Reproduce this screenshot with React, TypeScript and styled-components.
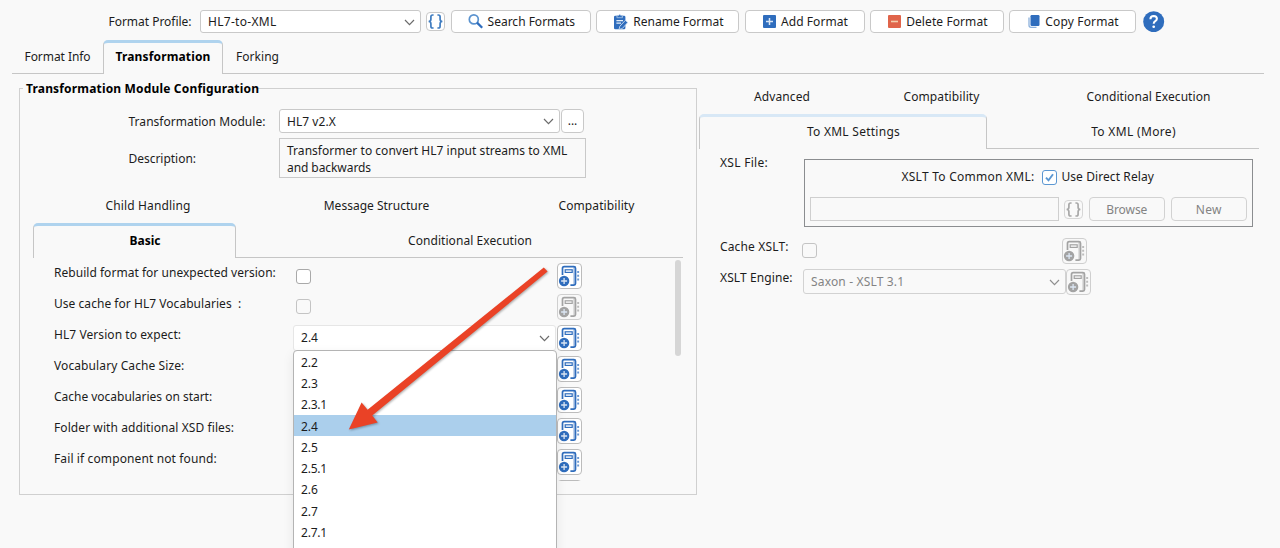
import React from 'react';
import styled, { createGlobalStyle, css } from 'styled-components';

const BLUE = '#2f6dbd';

const GlobalStyle = createGlobalStyle`
  *, *::before, *::after { box-sizing: border-box; }
  body {
    margin: 0;
    background: #f9f9f9;
    color: #1c1c1c;
    font: 12px/18px "Noto Sans", "Open Sans", sans-serif;
    overflow: hidden;
  }
  button { font: inherit; color: inherit; margin: 0; padding: 0; }
`;

const Page = styled.div`
  position: relative;
  width: 1280px;
  height: 548px;
  overflow: hidden;
  background: #f9f9f9;
`;

const Text = styled.span<{ $ls?: number; $bold?: boolean }>`
  white-space: pre;
  letter-spacing: ${(p) => p.$ls ?? 0.06}px;
  ${(p) => p.$bold && css`font-weight: 700; color: #000;`}
`;

/* ---------- toolbar ---------- */

const Toolbar = styled.header`
  display: flex;
  align-items: center;
  height: 43px;
  padding-left: 108.5px;
`;

const Select = styled.div<{ $w: number; $h?: number; $disabled?: boolean; $flat?: boolean }>`
  display: flex;
  align-items: center;
  justify-content: space-between;
  flex: none;
  width: ${(p) => p.$w}px;
  height: ${(p) => p.$h ?? 24}px;
  padding: 1px 5px 0 7px;
  border: 1px solid ${(p) => (p.$flat ? '#e6e6e6' : p.$disabled ? '#d2d2d2' : '#c9c9c9')};
  border-radius: 3px;
  background: ${(p) => (p.$disabled ? '#f9f9f9' : '#fff')};
  color: ${(p) => (p.$disabled ? '#838383' : '#1c1c1c')};
`;

const ProfileSelect = styled(Select)`
  margin: 0 5px 0 8.5px;
`;

const BraceButton = styled.button<{ $disabled?: boolean }>`
  display: grid;
  place-items: center;
  flex: none;
  width: 19px;
  height: 19px;
  border: 1px solid ${(p) => (p.$disabled ? '#d6d6d6' : '#c9c9c9')};
  border-radius: 4px;
  background: ${(p) => (p.$disabled ? '#f9f9f9' : '#fff')};
  color: ${(p) => (p.$disabled ? '#a8a8a8' : '#3f7cc0')};
`;

const ToolButton = styled.button<{ $w: number; $pad: number }>`
  display: flex;
  align-items: center;
  gap: 5px;
  flex: none;
  width: ${(p) => p.$w}px;
  height: 23px;
  margin-left: 5.6px;
  padding-left: ${(p) => p.$pad}px;
  border: 1px solid #c9c9c9;
  border-radius: 4px;
  background: #fff;
`;

const HelpButton = styled.button`
  display: flex;
  margin-left: 7.4px;
  border: 0;
  background: none;
`;

/* ---------- tabs ---------- */

const MainTabs = styled.nav`
  display: flex;
  height: 34px;
  margin: -3px 16px 0 12px;
`;

const TabRow = styled.nav<{ $h?: number }>`
  display: flex;
  height: ${(p) => p.$h ?? 34}px;
`;

const Tab = styled.div<{ $w?: number; $active?: boolean; $line?: boolean; $pale?: boolean; $shift?: number }>`
  display: flex;
  align-items: center;
  justify-content: center;
  ${(p) => (p.$w ? `flex: none; width: ${p.$w}px;` : 'flex: 1;')}
  padding: 1px 0 0 ${(p) => p.$shift ?? 0}px;
  border-bottom: 1px solid ${(p) => (p.$line ? '#c6c6c6' : 'transparent')};
  ${(p) =>
    p.$active &&
    css`
      padding-top: 0;
      padding-bottom: 3px;
      border: 1px solid #c6c6c6;
      border-top: 3px solid ${p.$pale ? '#d8e8f6' : '#afd3ee'};
      border-bottom: 0;
      border-radius: 5px 5px 0 0;
    `}
`;

const MainTabFill = styled(Tab)`
  justify-content: flex-start;
  padding-left: 13px;
`;

/* ---------- main columns ---------- */

const Columns = styled.main`
  display: flex;
`;

const GroupBox = styled.section`
  flex: none;
  width: 678px;
  height: 407px;
  margin: 14px 0 0 19px;
  border: 1px solid #d0d0d0;
`;

const Legend = styled.div`
  display: flex;
  align-items: center;
  width: 234px;
  height: 18px;
  margin: -9px 0 0 3px;
  padding-left: 3px;
  background: #f9f9f9;
`;

const FieldRow = styled.div<{ $top: number; $h: number }>`
  display: flex;
  align-items: center;
  height: ${(p) => p.$h}px;
  margin-top: ${(p) => p.$top}px;
  padding-left: 108.5px;
`;

const FieldLabel = styled.div`
  flex: none;
  width: 150.5px;
  padding-top: 2px;
`;

const EllipsisButton = styled.button`
  width: 23px;
  height: 24px;
  margin-left: 1px;
  border: 1px solid #c9c9c9;
  border-radius: 4px;
  background: #fff;
`;

const Description = styled.div`
  display: flex;
  flex-direction: column;
  width: 307px;
  height: 40px;
  padding: 3px 7px;
  border: 1px solid #c9c9c9;
  line-height: 17px;
`;

const InnerTabs = styled.div`
  margin: 11px 13px 0;
`;

const ScrollPane = styled.div`
  display: flex;
  justify-content: space-between;
  height: 223px;
  margin: 0 13px;
  overflow: hidden;
`;

const OptionList = styled.div`
  padding: 5.3px 0 0 21px;
`;

const OptionRow = styled.div<{ $tall?: boolean }>`
  display: flex;
  align-items: flex-start;
  height: ${(p) => (p.$tall ? 31.8 : 30.85)}px;
`;

const OptionLabel = styled.div`
  flex: none;
  width: 239px;
  padding-top: 1px;
`;

const OptionValue = styled.div`
  flex: none;
  width: 264px;
`;

const CheckBox = styled.span<{ $disabled?: boolean; $on?: boolean }>`
  display: grid;
  place-items: center;
  flex: none;
  width: 15px;
  height: 15px;
  border: 1px solid ${(p) => (p.$on ? '#5b97d2' : p.$disabled ? '#c4c4c4' : '#a9a9a9')};
  border-radius: 3px;
  background: ${(p) => (p.$disabled ? '#f9f9f9' : '#fff')};
`;

const OptionCheck = styled(CheckBox)`
  margin: 5.3px 0 0 3px;
`;

const NoteButton = styled.button<{ $disabled?: boolean }>`
  display: grid;
  place-items: center;
  flex: none;
  width: 25px;
  height: 26px;
  border: 1px solid ${(p) => (p.$disabled ? '#cfcfcf' : '#bcbcbc')};
  border-radius: 4px;
  background: ${(p) => (p.$disabled ? '#f8f8f8' : '#fff')};
  color: ${(p) => (p.$disabled ? '#a3a3a3' : BLUE)};
`;

const ScrollThumb = styled.div`
  width: 6px;
  height: 96px;
  margin: 2px 2px 0 0;
  border-radius: 3px;
  background: #d6d6d6;
`;

/* ---------- right side ---------- */

const RightPanel = styled.section`
  flex: none;
  width: 560px;
  margin: 6px 0 0 2px;
`;

const Settings = styled.div`
  display: grid;
  grid-template-columns: 83px 450px;
  grid-template-rows: 79px 31px 30px;
  padding: 10px 0 0 21px;
`;

const SettingLabel = styled.div<{ $top: number }>`
  margin-top: ${(p) => p.$top}px;
`;

const XslBox = styled.div`
  height: 68px;
  margin-left: 1px;
  padding: 8px 5px;
  border: 1px solid #8b8d90;
`;

const RelayRow = styled.div`
  display: flex;
  align-items: center;
  justify-content: flex-end;
  height: 18px;
  padding-right: 93px;
`;

const RelayCheck = styled(CheckBox)`
  margin: 0 4px 0 8px;
`;

const FileRow = styled.div`
  display: flex;
  align-items: center;
  height: 24px;
  margin-top: 11px;
`;

const FileInput = styled.div`
  flex: none;
  width: 249px;
  height: 24px;
  margin-right: 5px;
  border: 1px solid #cfcfcf;
`;

const PlainButton = styled.button`
  width: 77px;
  height: 24px;
  margin-left: 5.5px;
  padding-top: 1px;
  border: 1px solid #d2d2d2;
  border-radius: 4px;
  background: #f9f9f9;
  color: #838383;
`;

const SettingValue = styled.div`
  display: flex;
  align-items: flex-start;
`;

const CacheCheck = styled(CheckBox)`
  margin: 5px 245px 0 -1px;
`;

/* ---------- overlays ---------- */

const Dropdown = styled.div`
  position: absolute;
  left: 293px;
  top: 350px;
  width: 264px;
  height: 220px;
  border: 1px solid #b4b4b4;
  border-radius: 4px;
  background: #fff;
  box-shadow: 0 4px 12px rgba(0, 0, 0, 0.08);
`;

const DropdownItem = styled.div<{ $selected?: boolean }>`
  display: flex;
  align-items: center;
  height: 21.3px;
  padding: 2px 0 0 7px;
  background: ${(p) => (p.$selected ? '#abcfec' : 'transparent')};
`;

const ArrowOverlay = styled.svg`
  position: absolute;
  left: 340px;
  top: 260px;
  filter: drop-shadow(1px 1.5px 1.2px rgba(0, 0, 0, 0.32));
`;

/* ---------- icons ---------- */

const Chevron = ({ color = '#6b6b6b' }: { color?: string }) => (
  <svg width="11" height="7" viewBox="0 0 11 7" fill="none" stroke={color} strokeWidth="1.2">
    <path d="M1 1l4.5 4.6L10 1" />
  </svg>
);

const Braces = () => (
  <svg width="17" height="17" viewBox="0 0 17 17" fill="none" stroke="currentColor" strokeWidth="1.7">
    <path d="M6.6 2H5.6Q3.9 2 3.9 3.8V6.3Q3.9 8.5 1.6 8.5Q3.9 8.5 3.9 10.7V13.2Q3.9 15 5.6 15H6.6" />
    <path d="M10.4 2H11.4Q13.1 2 13.1 3.8V6.3Q13.1 8.5 15.4 8.5Q13.1 8.5 13.1 10.7V13.2Q13.1 15 11.4 15H10.4" />
  </svg>
);

const SearchIcon = () => (
  <svg width="15" height="15" viewBox="0 0 15 15" fill="none">
    <circle cx="5.8" cy="5.4" r="4.5" stroke="#5b93cf" strokeWidth="1.7" />
    <path d="M9 8.6L14.2 13.8" stroke={BLUE} strokeWidth="2.3" />
  </svg>
);

const RenameIcon = () => (
  <svg width="15" height="16" viewBox="0 0 15 16" fill="none">
    <rect x="1" y="1.8" width="11.4" height="13.4" rx="1.3" fill={BLUE} />
    <path d="M3.9 3.7V1.8H5Q6.7 -0.5 8.4 1.8H9.5V3.7Z" fill={BLUE} stroke="#a9c5e6" strokeWidth=".8" />
    <path d="M3.4 6.6H10M3.4 9.2H8" stroke="#e3edf8" strokeWidth="1.2" />
    <path d="M6 15.4L6.8 12.3L12.4 6.3L14.8 8.5L9.2 14.6Z" fill={BLUE} stroke="#dbe7f5" strokeWidth=".8" />
  </svg>
);

const AddIcon = () => (
  <svg width="13" height="13" viewBox="0 0 13 13">
    <rect width="13" height="13" rx="1" fill={BLUE} />
    <path d="M6.5 3V10M3 6.5H10" stroke="#d9e6f5" strokeWidth="1.5" />
  </svg>
);

const DeleteIcon = () => (
  <svg width="13" height="13" viewBox="0 0 13 13">
    <rect width="13" height="13" rx="1" fill="#e0644a" />
    <path d="M3 6.5H10" stroke="#f3cfae" strokeWidth="1.6" />
  </svg>
);

const CopyIcon = () => (
  <svg width="12" height="13" viewBox="0 0 12 13" fill="none">
    <path d="M1 2.5V10.2Q1 12.3 3 12.3H8.5" stroke="#8db1dc" strokeWidth="1.3" />
    <rect x="2.5" y="0" width="9" height="11" rx="1.2" fill={BLUE} />
  </svg>
);

const HelpIcon = () => (
  <svg width="21.4" height="21.4" viewBox="0 0 22 22" fill="none">
    <circle cx="11" cy="11" r="10.8" fill={BLUE} />
    <path d="M7.6 8.4Q7.7 5.2 11 5.2Q14.3 5.3 14.3 8Q14.3 9.5 12.6 10.5Q11 11.4 11 13.1" stroke="#fff" strokeWidth="2.1" />
    <circle cx="11" cy="16.2" r="1.4" fill="#fff" />
  </svg>
);

const NoteIcon = () => (
  <svg width="23" height="24" viewBox="0 0 23 24" fill="none" stroke="currentColor">
    <path d="M4.5 11V4.2Q4.5 2.6 6.1 2.6H15.9Q17.5 2.6 17.5 4.2V19.6Q17.5 21.2 15.9 21.2H12.4" strokeWidth="1.7" />
    <path d="M16 3V21" strokeWidth="1" opacity=".6" />
    <rect x="7.2" y="5.8" width="7" height="2.6" strokeWidth="1.2" />
    <path d="M19.2 8H21.1M19.2 11.8H21.1M19.2 15.6H21.1" strokeWidth="2" opacity=".7" />
    <circle cx="6.1" cy="17" r="5.2" fill="currentColor" stroke="none" />
    <path d="M6.1 14V20M3.1 17H9.1" stroke="#dbe6f3" strokeWidth="1.3" />
  </svg>
);

const CheckMark = () => (
  <svg width="13" height="13" viewBox="0 0 13 13" fill="none">
    <path d="M3 6.6L5.5 9.3L10 3.2" stroke="#5b97d2" strokeWidth="1.9" />
  </svg>
);

/* ---------- data ---------- */

const tools = [
  { label: 'Search Formats', ls: -0.006, w: 140, pad: 16, icon: <SearchIcon /> },
  { label: 'Rename Format', ls: 0.022, w: 143.2, pad: 16, icon: <RenameIcon /> },
  { label: 'Add Format', ls: 0.07, w: 119.6, pad: 17, icon: <AddIcon /> },
  { label: 'Delete Format', ls: 0.09, w: 133.6, pad: 17, icon: <DeleteIcon /> },
  { label: 'Copy Format', ls: 0.14, w: 126.4, pad: 18, icon: <CopyIcon /> },
];

type Option = { label: string; ls: number; kind?: 'check' | 'select'; disabled?: boolean };

const options: Option[] = [
  { label: 'Rebuild format for unexpected version:', ls: 0.03, kind: 'check' },
  { label: 'Use cache for HL7 Vocabularies  :', ls: 0.04, kind: 'check', disabled: true },
  { label: 'HL7 Version to expect:', ls: 0.07, kind: 'select' },
  { label: 'Vocabulary Cache Size:', ls: 0.1 },
  { label: 'Cache vocabularies on start:', ls: -0.02 },
  { label: 'Folder with additional XSD files:', ls: 0.08 },
  { label: 'Fail if component not found:', ls: 0.12 },
  { label: '', ls: 0 },
];

const versions = ['2.2', '2.3', '2.3.1', '2.4', '2.5', '2.5.1', '2.6', '2.7', '2.7.1'];

export default function App() {
  return (
    <Page>
      <GlobalStyle />
      <Toolbar>
        <Text $ls={-0.026}>Format Profile:</Text>
        <ProfileSelect $w={221} $h={23}>
          <Text $ls={0.3}>HL7-to-XML</Text>
          <Chevron />
        </ProfileSelect>
        <BraceButton><Braces /></BraceButton>
        {tools.map((t) => (
          <ToolButton key={t.label} $w={t.w} $pad={t.pad}>
            {t.icon}
            <Text $ls={t.ls}>{t.label}</Text>
          </ToolButton>
        ))}
        <HelpButton><HelpIcon /></HelpButton>
      </Toolbar>

      <MainTabs>
        <Tab $w={91} $line><Text $ls={-0.067}>Format Info</Text></Tab>
        <Tab $w={120} $active><Text $bold $ls={0.146}>Transformation</Text></Tab>
        <MainTabFill $line><Text $ls={0.036}>Forking</Text></MainTabFill>
      </MainTabs>

      <Columns>
        <GroupBox>
          <Legend><Text $bold $ls={0.17}>Transformation Module Configuration</Text></Legend>
          <FieldRow $top={11} $h={24}>
            <FieldLabel><Text $ls={0.035}>Transformation Module:</Text></FieldLabel>
            <Select $w={281}>
              <Text $ls={0.05}>HL7 v2.X</Text>
              <Chevron />
            </Select>
            <EllipsisButton>...</EllipsisButton>
          </FieldRow>
          <FieldRow $top={5} $h={40}>
            <FieldLabel><Text $ls={-0.025}>Description:</Text></FieldLabel>
            <Description>
              <Text $ls={0.035}>Transformer to convert HL7 input streams to XML</Text>
              <Text $ls={-0.07}>and backwards</Text>
            </Description>
          </FieldRow>
          <InnerTabs>
            <TabRow>
              <Tab $w={230}><Text $ls={0.135}>Child Handling</Text></Tab>
              <Tab $w={227}><Text $ls={0.004}>Message Structure</Text></Tab>
              <Tab $shift={20}><Text $ls={0.097}>Compatibility</Text></Tab>
            </TabRow>
            <TabRow $h={35}>
              <Tab $w={203} $active $shift={21}><Text $bold $ls={0.003}>Basic</Text></Tab>
              <Tab $line $shift={21}><Text $ls={0.065}>Conditional Execution</Text></Tab>
            </TabRow>
          </InnerTabs>
          <ScrollPane>
            <OptionList>
              {options.map((o, i) => (
                <OptionRow key={i} $tall={i === 5}>
                  <OptionLabel><Text $ls={o.ls}>{o.label}</Text></OptionLabel>
                  <OptionValue>
                    {o.kind === 'check' && <OptionCheck as="div" $disabled={o.disabled} />}
                    {o.kind === 'select' && (
                      <Select $w={263} $h={26} $flat>
                        <Text $ls={0.016}>2.4</Text>
                        <Chevron />
                      </Select>
                    )}
                  </OptionValue>
                  <NoteButton $disabled={o.disabled}><NoteIcon /></NoteButton>
                </OptionRow>
              ))}
            </OptionList>
            <ScrollThumb />
          </ScrollPane>
        </GroupBox>

        <RightPanel>
          <TabRow>
            <Tab $w={166}><Text $ls={0.1}>Advanced</Text></Tab>
            <Tab $w={153}><Text $ls={0.097}>Compatibility</Text></Tab>
            <Tab $shift={20}><Text $ls={0.065}>Conditional Execution</Text></Tab>
          </TabRow>
          <TabRow $h={35}>
            <Tab $w={288} $active $pale $shift={21}><Text $ls={0.26}>To XML Settings</Text></Tab>
            <Tab $line $shift={21}><Text $ls={0.33}>To XML (More)</Text></Tab>
          </TabRow>
          <Settings>
            <SettingLabel $top={-5}><Text $ls={0.285}>XSL File:</Text></SettingLabel>
            <XslBox>
              <RelayRow>
                <Text $ls={0.25}>XSLT To Common XML:</Text>
                <RelayCheck $on><CheckMark /></RelayCheck>
                <Text $ls={0.09}>Use Direct Relay</Text>
              </RelayRow>
              <FileRow>
                <FileInput />
                <BraceButton $disabled><Braces /></BraceButton>
                <PlainButton><Text $ls={-0.08}>Browse</Text></PlainButton>
                <PlainButton><Text $ls={0.3}>New</Text></PlainButton>
              </FileRow>
            </XslBox>
            <SettingLabel $top={0}><Text $ls={0.15}>Cache XSLT:</Text></SettingLabel>
            <SettingValue>
              <CacheCheck $disabled />
              <NoteButton $disabled><NoteIcon /></NoteButton>
            </SettingValue>
            <SettingLabel $top={0}><Text $ls={0.1}>XSLT Engine:</Text></SettingLabel>
            <SettingValue>
              <Select $w={263} $h={25} $disabled>
                <Text $ls={0.16}>Saxon - XSLT 3.1</Text>
                <Chevron color="#8f8f8f" />
              </Select>
              <NoteButton $disabled><NoteIcon /></NoteButton>
            </SettingValue>
          </Settings>
        </RightPanel>
      </Columns>

      <Dropdown>
        {versions.map((v) => (
          <DropdownItem key={v} $selected={v === '2.4'}>
            <Text $ls={v.length > 3 ? -0.2 : -0.1}>{v}</Text>
          </DropdownItem>
        ))}
      </Dropdown>

      <ArrowOverlay width="215" height="180" viewBox="340 260 215 180">
        <path d="M543.8 267.4L547.6 271.6L372.2 415.4L377.7 422.4L348.8 429.4L361.6 402.6L367.6 409.8Z" fill="#ea4226" />
      </ArrowOverlay>
    </Page>
  );
}
